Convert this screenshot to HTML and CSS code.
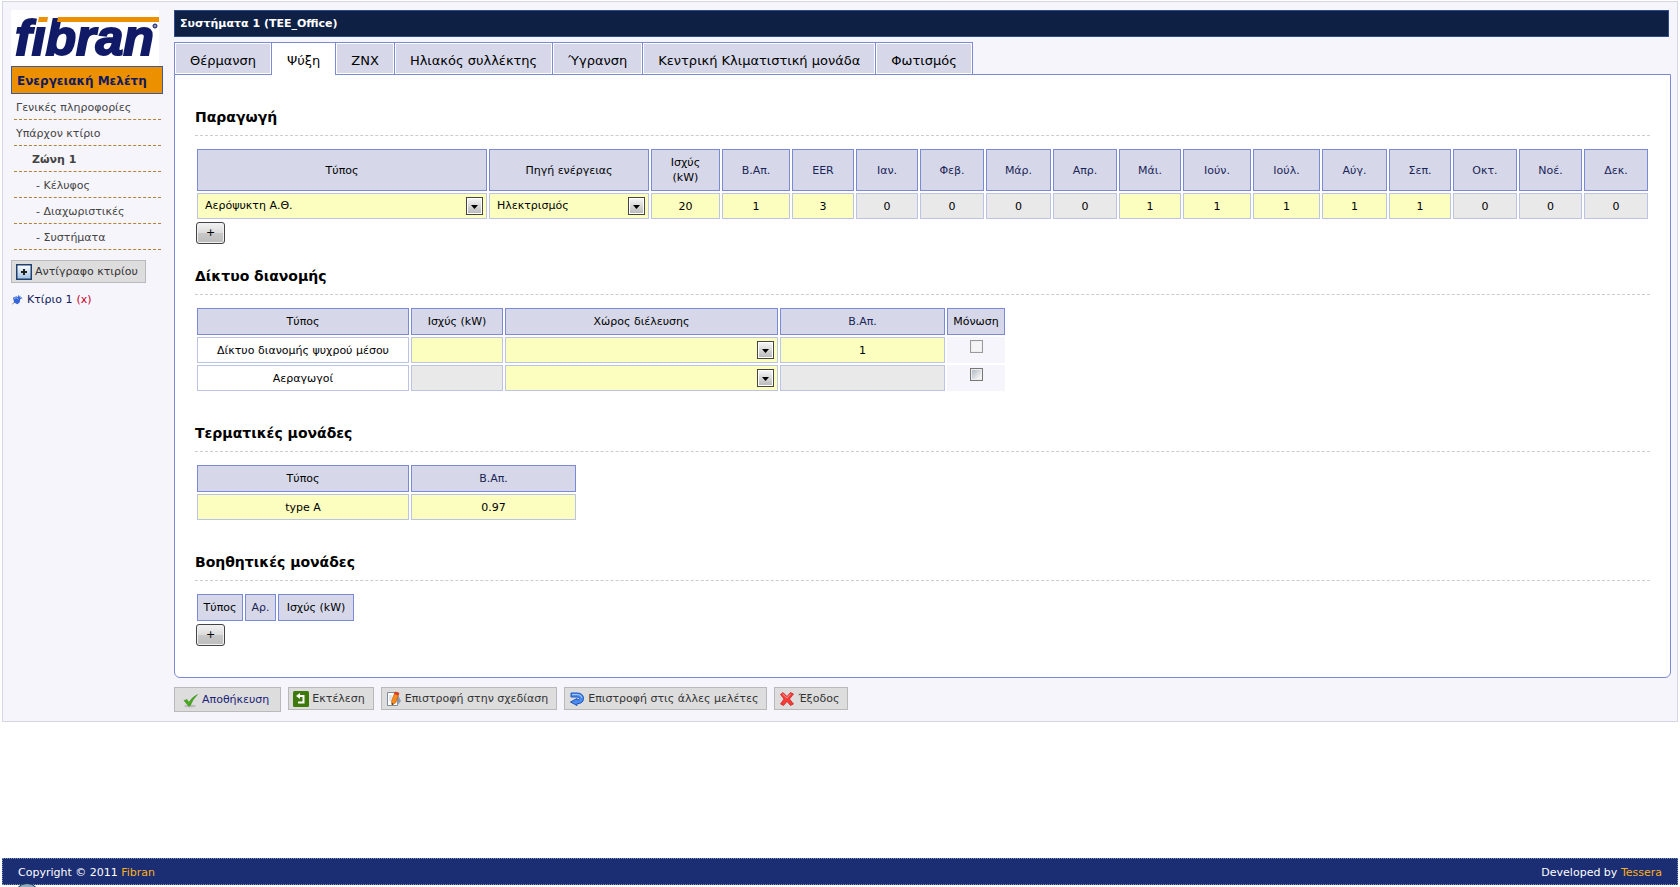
FILE: index.html
```html
<!DOCTYPE html>
<html lang="el">
<head>
<meta charset="utf-8">
<title>Συστήματα 1 (TEE_Office)</title>
<link rel="stylesheet" href="styles.css">
</head>
<body>
<div class="wrapper">
  <aside class="sidebar">
    <a class="logo" href="#" aria-label="fibran">
      <svg width="148" height="56" viewBox="0 0 148 56">
        <text class="logo-text" x="4" y="45">fibran</text>
        <path fill="#fff" d="M26 0H38L36 15H26z"/>
        <path fill="#ec9000" d="M28 7H37L36 12H27zM47 7H148V12H46z"/>
        <circle cx="144" cy="16" r="2" fill="#8c92bd" stroke="#101a66"/>
      </svg>
    </a>
    <h1 class="side-title">Ενεργειακή Μελέτη</h1>
    <nav class="menu">
      <a href="#">Γενικές πληροφορίες</a>
      <a href="#">Υπάρχον κτίριο</a>
      <a class="zone" href="#">Ζώνη 1</a>
      <a class="sub" href="#">- Κέλυφος</a>
      <a class="sub" href="#">- Διαχωριστικές</a>
      <a class="sub" href="#">- Συστήματα</a>
    </nav>
    <button class="action copy" type="button">
      <svg width="16" height="16" viewBox="0 0 16 16"><defs><linearGradient id="pg" x2="0" y2="1"><stop stop-color="#fff"/><stop offset="1" stop-color="#9fc0e4"/></linearGradient></defs><rect x=".75" y=".75" width="14.5" height="14.5" fill="url(#pg)" stroke="#20406e" stroke-width="1.5"/><path d="M5 8h6M8 5v6" stroke="#222" stroke-width="2"/></svg>
      Αντίγραφο κτιρίου
    </button>
    <div class="building">
      <svg width="11" height="12" viewBox="0 0 12 12"><path d="M0 11L4 7" stroke="#777" stroke-width="1"/><path d="M1 3.500L5 2L6.500 3L7 .5L11.500 4L9 5L8.500 8.500L6 10.500L2.500 9z" fill="#3565d8"/><path d="M2 4.500L5 3.500L7 5M8 2L10 4" stroke="#9dbcff" fill="none"/></svg>
      <a href="#">Κτίριο 1</a> <a class="remove" href="#">(x)</a>
    </div>
  </aside>

  <main class="main">
    <h2 class="title-bar">Συστήματα 1 (TEE_Office)</h2>
    <nav class="tabs">
      <a href="#">Θέρμανση</a>
      <a class="active" href="#">Ψύξη</a>
      <a href="#">ZNX</a>
      <a href="#">Ηλιακός συλλέκτης</a>
      <a href="#">Ύγρανση</a>
      <a href="#">Κεντρική Κλιματιστική μονάδα</a>
      <a href="#">Φωτισμός</a>
    </nav>
    <div class="panel">
      <section class="with-add">
        <h3>Παραγωγή</h3>
        <table class="production">
          <colgroup><col style="width:290px"><col style="width:160px"><col style="width:69px"><col style="width:68px"><col style="width:62px"><col style="width:62px"><col style="width:64px"><col style="width:65px"><col style="width:64px"><col style="width:62px"><col style="width:68px"><col style="width:67px"><col style="width:65px"><col style="width:62px"><col style="width:64px"><col style="width:63px"><col style="width:64px"></colgroup>
          <thead><tr><th>Τύπος</th><th>Πηγή ενέργειας</th><th>Ισχύς (kW)</th><th><a href="#">Β.Απ.</a></th><th><a href="#">EER</a></th><th><a href="#">Ιαν.</a></th><th><a href="#">Φεβ.</a></th><th><a href="#">Μάρ.</a></th><th><a href="#">Απρ.</a></th><th><a href="#">Μάι.</a></th><th><a href="#">Ιούν.</a></th><th><a href="#">Ιούλ.</a></th><th><a href="#">Αύγ.</a></th><th><a href="#">Σεπ.</a></th><th><a href="#">Οκτ.</a></th><th><a href="#">Νοέ.</a></th><th><a href="#">Δεκ.</a></th></tr></thead>
          <tbody><tr>
            <td><select aria-label="Τύπος"><option>Αερόψυκτη Α.Θ.</option></select></td>
            <td><select aria-label="Πηγή ενέργειας"><option>Ηλεκτρισμός</option></select></td>
            <td><input type="text" aria-label="Ισχύς (kW)" value="20"></td>
            <td><input type="text" aria-label="Β.Απ." value="1"></td>
            <td><input type="text" aria-label="EER" value="3"></td>
            <td><input type="text" aria-label="Ιαν." value="0" readonly></td>
            <td><input type="text" aria-label="Φεβ." value="0" readonly></td>
            <td><input type="text" aria-label="Μάρ." value="0" readonly></td>
            <td><input type="text" aria-label="Απρ." value="0" readonly></td>
            <td><input type="text" aria-label="Μάι." value="1"></td>
            <td><input type="text" aria-label="Ιούν." value="1"></td>
            <td><input type="text" aria-label="Ιούλ." value="1"></td>
            <td><input type="text" aria-label="Αύγ." value="1"></td>
            <td><input type="text" aria-label="Σεπ." value="1"></td>
            <td><input type="text" aria-label="Οκτ." value="0" readonly></td>
            <td><input type="text" aria-label="Νοέ." value="0" readonly></td>
            <td><input type="text" aria-label="Δεκ." value="0" readonly></td>
          </tr></tbody>
        </table>
        <button class="add" type="button">+</button>
      </section>

      <section>
        <h3>Δίκτυο διανομής</h3>
        <table>
          <colgroup><col class="c-type"><col class="c-power"><col class="c-space"><col class="c-factor"><col class="c-check"></colgroup>
          <thead><tr><th>Τύπος</th><th>Ισχύς (kW)</th><th>Χώρος διέλευσης</th><th><a href="#">Β.Απ.</a></th><th>Μόνωση</th></tr></thead>
          <tbody>
            <tr><td class="name">Δίκτυο διανομής ψυχρού μέσου</td><td><input type="text" aria-label="Ισχύς (kW)"></td><td><select aria-label="Χώρος διέλευσης"><option></option></select></td><td><input type="text" aria-label="Β.Απ." value="1"></td><td class="check"><input type="checkbox" aria-label="Μόνωση" disabled></td></tr>
            <tr><td class="name">Αεραγωγοί</td><td><input type="text" aria-label="Ισχύς (kW)" readonly></td><td><select aria-label="Χώρος διέλευσης"><option></option></select></td><td><input type="text" aria-label="Β.Απ." readonly></td><td class="check"><input type="checkbox" aria-label="Μόνωση"></td></tr>
          </tbody>
        </table>
      </section>

      <section>
        <h3>Τερματικές μονάδες</h3>
        <table>
          <colgroup><col class="c-type"><col class="c-factor"></colgroup>
          <thead><tr><th>Τύπος</th><th><a href="#">Β.Απ.</a></th></tr></thead>
          <tbody><tr><td><input type="text" aria-label="Τύπος" value="type A"></td><td><input type="text" aria-label="Β.Απ." value="0.97"></td></tr></tbody>
        </table>
      </section>

      <section class="with-add">
        <h3>Βοηθητικές μονάδες</h3>
        <table>
          <colgroup><col class="c-aux"><col class="c-count"><col class="c-auxpower"></colgroup>
          <thead><tr><th>Τύπος</th><th><a href="#">Αρ.</a></th><th>Ισχύς (kW)</th></tr></thead>
        </table>
        <button class="add" type="button">+</button>
      </section>
    </div>
    <div class="actions">
      <button class="action save" type="button"><svg width="16" height="16" viewBox="0 0 16 16"><ellipse cx="7" cy="14" rx="6" ry="1.500" fill="#bbb"/><path d="M1 8.500L4 7.500L6 10.500Q9 5 14.500 2.500Q9.500 7.500 7 14H5.500z" fill="#4aab1e" stroke="#2d8610" stroke-width=".5"/></svg>Αποθήκευση</button>
      <button class="action" type="button"><svg width="16" height="16" viewBox="0 0 16 16"><rect width="16" height="16" rx="1.500" fill="#3f780b"/><path d="M6 5h4.500v6.500H5" fill="none" stroke="#fff" stroke-width="2"/><path d="M3 5L7 2v6z" fill="#fff"/></svg>Εκτέλεση</button>
      <button class="action" type="button"><svg width="16" height="16" viewBox="0 0 16 16"><path d="M1.500 1.500h10v13h-10z" fill="#fff" stroke="#7e8b9b"/><path d="M12 4L15 10L11 15z" fill="#8c9bb0"/><path d="M3 5h3M3 7h3M3 9h2" stroke="#c5cedb"/><path d="M9 1L13 2L10 11.500L6 14L5.500 10z" fill="#f58a1c" stroke="#bb5210" stroke-width=".6"/><path d="M9 1L13 2L12.300 4.500L8.300 3z" fill="#dd362c"/><path d="M5.700 12L7.500 13L6 14z" fill="#222"/></svg>Επιστροφή στην σχεδίαση</button>
      <button class="action" type="button"><svg width="16" height="16" viewBox="0 0 16 16"><path d="M2 2H8.500Q14.500 2.500 14.500 7.500Q14.500 12.500 8 12.800V14.500L1.500 11L8 7.500V9Q10.500 9 10.500 7.500Q10.500 6 8 6H2z" fill="#4c8bf0" stroke="#1c55ba"/><path d="M3 3.500H8.500Q12.500 3.500 13 7" fill="none" stroke="#a7ccff"/></svg>Επιστροφή στις άλλες μελέτες</button>
      <button class="action" type="button"><svg width="16" height="16" viewBox="0 0 16 16"><path d="M4 1.500L8 5.500L11.500 1.500L14.500 3L10.500 8L14.500 13L11.500 14.500L8 10.500L4.500 14.500L1.500 13L5 8L1.500 3.500z" fill="#f53b35" stroke="#c91e20" stroke-width=".7"/><path d="M3.500 3L8 7L11.500 3" fill="none" stroke="#ff9791"/></svg>Έξοδος</button>
    </div>
  </main>
</div>
<footer class="footer">
  <span>Copyright © 2011 <a href="#">Fibran</a></span>
  <span>Developed by <a href="#">Tessera</a></span>
  <i class="orb"></i>
</footer>
</body>
</html>
```
FILE: styles.css
```css
* { box-sizing: border-box; }

body {
  margin: 0;
  min-height: 100vh;
  display: flex;
  flex-direction: column;
  justify-content: space-between;
  padding: 1px 2px 2px;
  overflow: hidden;
  background: #fff;
  color: #000;
  font: 11px/15px Verdana, "DejaVu Sans", sans-serif;
}

a { color: inherit; text-decoration: none; }
button, input, select { font: inherit; color: inherit; margin: 0; }

.wrapper {
  display: flex;
  align-items: flex-start;
  gap: 11px;
  padding: 8px 6px 9px 8px;
  border: 1px solid #d5d7e6;
  background: #f6f5fb;
}

/* Sidebar */
.sidebar { flex: 0 0 152px; }
.logo { display: block; width: 148px; height: 56px; background: #fff; }
.logo svg { display: block; }
.logo-text {
  font: italic bold 50px "Liberation Sans", sans-serif;
  fill: #101a66;
  stroke: #101a66;
  stroke-width: 2px;
}
.side-title {
  margin: 0;
  height: 28px;
  padding: 0 5px;
  border: 1px solid #3d5a9c;
  background: #ec9000;
  color: #101a5c;
  font-size: 12px;
  line-height: 28px;
  white-space: nowrap;
}
.menu { margin: 0 2px 10px 3px; }
.menu a {
  display: block;
  height: 26px;
  padding-left: 2px;
  border-bottom: 1px dashed #b08336;
  color: #444;
  line-height: 28px;
}
.menu .zone { padding-left: 18px; font-weight: bold; }
.menu .sub { padding-left: 22px; }

.action {
  display: flex;
  align-items: center;
  gap: 3px;
  height: 23px;
  padding: 0 8px 0 4px;
  border: 1px solid #b9b9b9;
  background: #ddd;
  color: #333;
  white-space: nowrap;
}
.copy { padding-right: 7px; }
.building {
  display: flex;
  align-items: center;
  gap: 4px;
  padding: 9px 1px;
  color: #101a5c;
}
.building .remove { color: #c8001e; }

/* Main column */
.main { flex: 1; min-width: 0; }
.title-bar {
  margin: 0 2px 5px 0;
  height: 27px;
  padding: 0 5px;
  border: 1px solid #2f4d8c;
  background: #0e2044;
  color: #fff;
  font-size: 11px;
  line-height: 26px;
}
.tabs { display: flex; }
.tabs a {
  height: 32px;
  padding: 0 15px;
  border: 1px solid #7b8ad6;
  border-width: 1px 0 0 1px;
  background: #d6d8e9;
  box-shadow: inset 0 0 0 1px #fff;
  font-size: 13px;
  line-height: 36px;
  white-space: nowrap;
}
.tabs a:last-child { border-right-width: 1px; }
.tabs .active {
  height: 33px;
  margin-bottom: -1px;
  background: #fff;
  position: relative;
}
.panel {
  display: flex;
  flex-direction: column;
  gap: 30px;
  padding: 32px 20px 30px;
  border: 1px solid #7b8ad6;
  border-radius: 0 0 6px 6px;
  background: #fff;
}
h3 {
  margin: 0 0 11px;
  height: 29px;
  border-bottom: 1px dashed #ccc;
  font-size: 14px;
  line-height: 20px;
}
.with-add { margin-bottom: -9px; }
.with-add:last-child { margin-bottom: 0; }

table { table-layout: fixed; width: 1px; border-spacing: 2px; }
.production { width: 100%; }
.c-type { width: 212px; }
.c-power { width: 92px; }
.c-space { width: 273px; }
.c-factor { width: 165px; }
.c-check { width: 58px; }
.c-aux { width: 46px; }
.c-count { width: 31px; }
.c-auxpower { width: 76px; }

th {
  height: 27px;
  padding: 0;
  border: 1px solid #7b8ad6;
  background: #d6d8e9;
  font-weight: normal;
  white-space: nowrap;
}
.production th { height: 42px; padding: 0 8px; white-space: normal; }
th a { color: #1b2558; }
td { height: 26px; padding: 0; background: #f6f5fb; text-align: center; }
td.name { border: 1px solid #bcc4e6; background: #fff; }
td.check { padding-top: 3px; vertical-align: top; }

td input[type="text"], td select {
  display: block;
  width: 100%;
  height: 26px;
  padding: 0;
  border: 1px solid #bcc4e6;
  border-radius: 0;
  background: #fbfebf;
  text-align: center;
}
td input[readonly] { background: #e9e9e9; }
td select {
  appearance: none;
  padding: 0 24px 1px 7px;
  text-align: left;
  background: #fbfebf url("data:image/svg+xml,%3Csvg xmlns='http://www.w3.org/2000/svg' width='17' height='18'%3E%3ClinearGradient id='g' x2='0' y2='1'%3E%3Cstop stop-color='%23f4f4f4'/%3E%3Cstop offset='1' stop-color='%23bbb'/%3E%3C/linearGradient%3E%3Crect x='.5' y='.5' width='16' height='17' fill='%23fff' stroke='%23444'/%3E%3Crect x='2' y='2' width='13' height='14' fill='url(%23g)'/%3E%3Cpath d='M5 8h7l-3.500 4z'/%3E%3C/svg%3E") no-repeat right 3px center;
}
input[type="checkbox"] {
  appearance: none;
  display: block;
  width: 13px;
  height: 13px;
  margin: 0 auto;
  border: 1px solid #777;
  background: linear-gradient(135deg, #aab4c0, #f4f4f4 80%);
  box-shadow: inset 0 0 0 1px #eee;
}
input[type="checkbox"]:disabled { border-color: #999; background: #f5f5f5; }

.add {
  display: block;
  width: 29px;
  height: 22px;
  margin: 1px;
  padding: 0 0 2px;
  border: 1px solid #444;
  border-radius: 3px;
  background: linear-gradient(#f2f2f2, #dcdcdc 48%, #c8c8c8 50%, #bdbdbd);
  box-shadow: inset 0 0 0 1px #f0f0f0;
}

.actions { display: flex; align-items: flex-start; gap: 7px; margin-top: 9px; }
.save { height: 25px; padding-left: 8px; padding-right: 11px; color: #1b2378; }

/* Footer */
.footer {
  position: relative;
  display: flex;
  justify-content: space-between;
  padding: 6px 15px 4px;
  border: 1px dotted #7090b8;
  background: #1b2d73;
  color: #fff;
}
.footer a { color: #f9b01e; }
.orb {
  position: absolute;
  left: 11px;
  top: 24px;
  width: 26px;
  height: 26px;
  border: 1px solid #1d3a5c;
  border-radius: 50%;
  background: linear-gradient(#8fa8bd, #d7e3ec);
}
```
